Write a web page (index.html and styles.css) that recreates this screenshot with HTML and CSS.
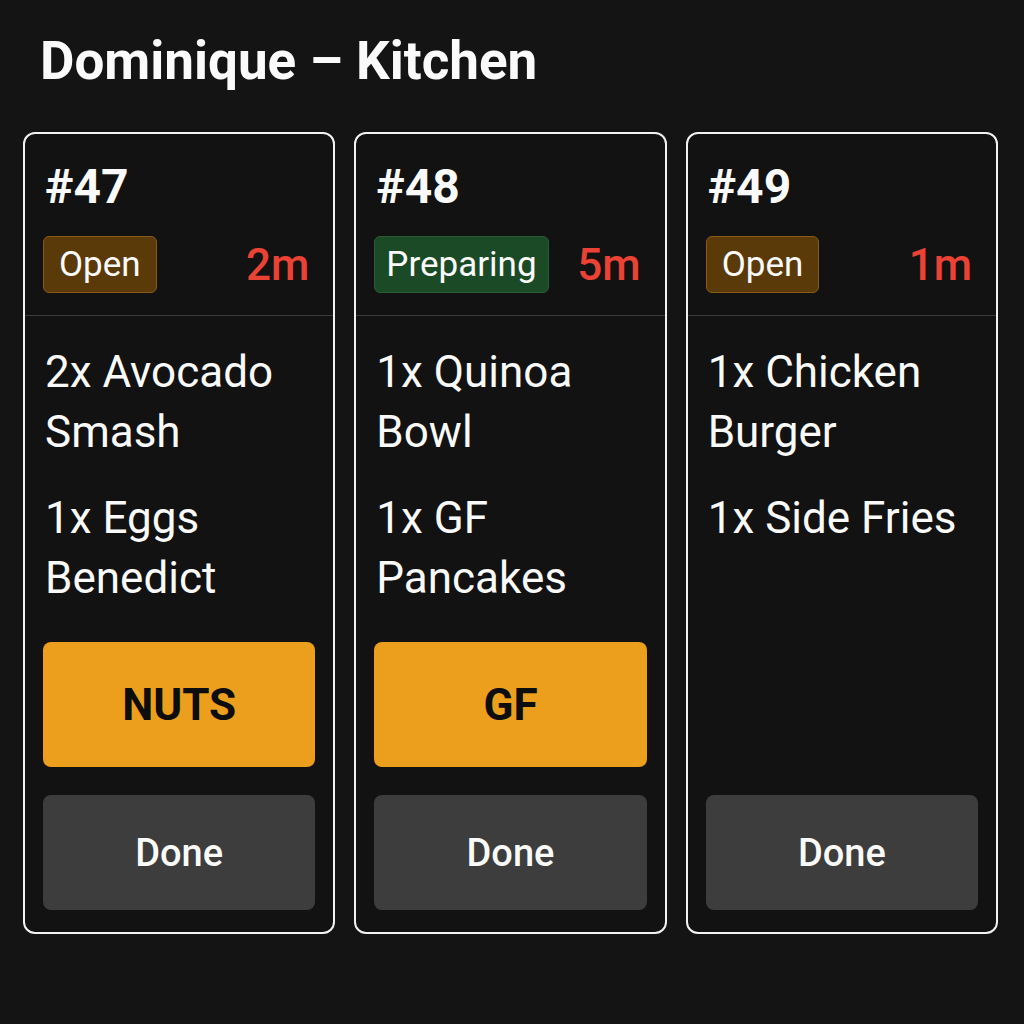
FILE: index.html
```html
<!DOCTYPE html>
<html lang="en">

<head>
    <meta charset="UTF-8">
    <meta name="viewport" content="width=device-width, initial-scale=1.0">
    <title>Dominique – Kitchen</title>
    <link rel="stylesheet" href="styles.css">
</head>

<body>
    <h1 class="title">Dominique – Kitchen</h1>

    <div class="tickets">
        <div class="ticket">
            <div class="ticket-head">
                <div class="ticket-no">#47</div>
                <div class="ticket-meta">
                    <span class="status status-open">Open</span>
                    <span class="elapsed">2m</span>
                </div>
            </div>
            <div class="ticket-body">
                <div class="item">2x Avocado Smash</div>
                <div class="item">1x Eggs Benedict</div>
                <div class="allergy">NUTS</div>
                <button class="done">Done</button>
            </div>
        </div>

        <div class="ticket">
            <div class="ticket-head">
                <div class="ticket-no">#48</div>
                <div class="ticket-meta">
                    <span class="status status-preparing">Preparing</span>
                    <span class="elapsed">5m</span>
                </div>
            </div>
            <div class="ticket-body">
                <div class="item">1x Quinoa Bowl</div>
                <div class="item">1x GF Pancakes</div>
                <div class="allergy">GF</div>
                <button class="done">Done</button>
            </div>
        </div>

        <div class="ticket">
            <div class="ticket-head">
                <div class="ticket-no">#49</div>
                <div class="ticket-meta">
                    <span class="status status-open">Open</span>
                    <span class="elapsed">1m</span>
                </div>
            </div>
            <div class="ticket-body">
                <div class="item">1x Chicken Burger</div>
                <div class="item">1x Side Fries</div>
                <button class="done">Done</button>
            </div>
        </div>
    </div>
</body>

</html>
```

FILE: styles.css
```css
body {
    margin: 0;
    padding: 30px 26px 0 23px;
    background-color: #141414;
    color: #fafafa;
    font-family: Roboto, "Liberation Sans", sans-serif;
}

.title {
    margin: 0 0 40px 17px;
    font-size: 53px;
    font-weight: 700;
    line-height: 62px;
}

/* Ticket columns */
.tickets {
    display: grid;
    grid-template-columns: repeat(3, 1fr);
    gap: 19px;
}

.ticket {
    display: flex;
    flex-direction: column;
    height: 798px;
    border: 2px solid #f2f2f2;
    border-radius: 12px;
    background-color: #121212;
}

.ticket-head {
    padding: 28px 18px 22px 18px;
    border-bottom: 1px solid #3a3a3a;
}

.ticket-no {
    padding-left: 2px;
    font-size: 48px;
    font-weight: 700;
    line-height: 50px;
}

.ticket-meta {
    display: flex;
    align-items: center;
    justify-content: space-between;
    margin-top: 24px;
}

.status {
    padding: 0 15px;
    border-radius: 6px;
    font-size: 35px;
    line-height: 55px;
}

.status-open {
    background-color: #5a3a09;
    border: 1px solid #8a5b16;
}

.status-preparing {
    padding: 0 11px;
    background-color: #1b4a26;
    border: 1px solid #2a5c34;
}

.elapsed {
    padding-right: 6px;
    color: #ea4335;
    font-size: 44px;
    font-weight: 500;
}

/* Items and actions */
.ticket-body {
    display: flex;
    flex: 1;
    flex-direction: column;
    padding: 26px 18px 22px 18px;
}

.item {
    margin-bottom: 26px;
    padding-left: 2px;
    font-size: 44px;
    line-height: 60px;
}

.allergy {
    display: flex;
    align-items: center;
    justify-content: center;
    height: 125px;
    margin-top: 8px;
    border-radius: 8px;
    background-color: #eb9f1c;
    color: #0d0d0d;
    font-size: 44px;
    font-weight: 700;
}

.done {
    height: 115px;
    margin-top: auto;
    border: none;
    border-radius: 8px;
    background-color: #3d3d3d;
    color: #fafafa;
    font-family: inherit;
    font-size: 38px;
    font-weight: 500;
}
```
